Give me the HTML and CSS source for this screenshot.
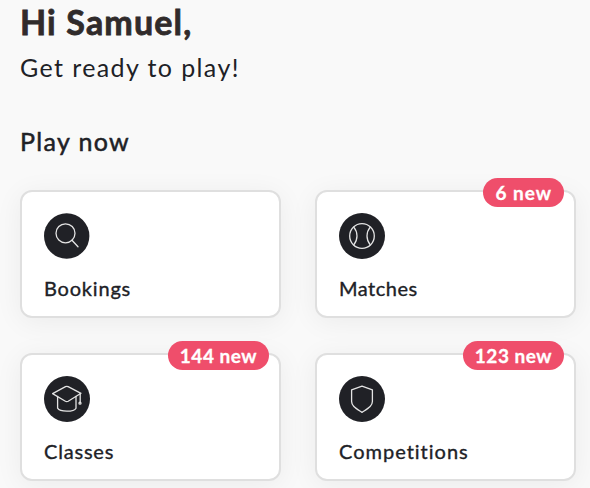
FILE: index.html
```html
<!DOCTYPE html>
<html lang="en">
<head>
    <meta charset="UTF-8">
    <meta name="viewport" content="width=device-width, initial-scale=1.0">
    <title>Play</title>
    <link rel="stylesheet" href="styles.css">
</head>
<body>

<main class="home">
    <h1 class="greeting">Hi Samuel,</h1>
    <p class="subtitle">Get ready to play!</p>

    <h2 class="section-title">Play now</h2>

    <div class="cards">
        <a class="card">
            <svg class="icon" viewBox="0 0 46 46">
                <circle class="disc" cx="22.7" cy="23" r="22.7"/>
                <circle cx="21.5" cy="20.3" r="9.5"/>
                <path d="M28 27.2L34 33.8"/>
            </svg>
            <span class="label bookings">Bookings</span>
        </a>

        <a class="card">
            <span class="badge six">6 new</span>
            <svg class="icon" viewBox="0 0 46 46">
                <circle class="disc" cx="23" cy="23" r="23"/>
                <circle cx="23" cy="23" r="12.3"/>
                <path d="M14.8 14.2Q18 18.2 18 23T14.8 31.8M31.2 14.2Q28 18.2 28 23T31.2 31.8"/>
            </svg>
            <span class="label matches">Matches</span>
        </a>

        <a class="card">
            <span class="badge">144 new</span>
            <svg class="icon" viewBox="0 0 46 46">
                <circle class="disc" cx="23" cy="23" r="23"/>
                <path d="M8.6 17.6L21.5 10.6Q22.8 10 24.1 10.6L37 17.3L24.2 25.2Q22.8 26 21.4 25.2Z"/>
                <path d="M13.6 20.5V32.2C16 36.2 29.8 36.2 32 32.2V20.5M36.2 18V26.5"/>
                <circle cx="36" cy="27.2" r="1"/>
            </svg>
            <span class="label classes">Classes</span>
        </a>

        <a class="card">
            <span class="badge">123 new</span>
            <svg class="icon" viewBox="0 0 46 46">
                <circle class="disc" cx="23" cy="23" r="23"/>
                <path d="M23 10.2L33.4 13.8V25.5C33.4 30 29.2 32.2 23 36.4C16.8 32.2 12.6 30 12.6 25.5V13.8Z"/>
            </svg>
            <span class="label competitions">Competitions</span>
        </a>
    </div>
</main>

</body>
</html>
```

FILE: styles.css
```css
* {
    box-sizing: border-box;
}
body {
    margin: 0;
    height: 488px;
    overflow: hidden;
    background-color: #f9f9f9;
    color: #202126;
    font-family: Lato, "Open Sans", sans-serif;
}
.home {
    padding: 1px 14px 0 20px;
}
.greeting {
    margin: 0;
    font-size: 34px;
    line-height: 42px;
    font-weight: 700;
    letter-spacing: 1.15px;
    color: #302b2b;
    -webkit-text-stroke: 0.8px #302b2b;
}
.subtitle {
    margin: 4px 0 0;
    font-size: 25px;
    line-height: 40px;
    letter-spacing: 1.4px;
}
.section-title {
    margin: 34px 0 0;
    font-size: 25px;
    line-height: 40px;
    font-weight: 400;
    letter-spacing: 1.35px;
    -webkit-text-stroke: 0.5px #202126;
}
.cards {
    display: grid;
    grid-template-columns: 260px 260px;
    gap: 35px;
    margin-top: 29px;
}
.card {
    position: relative;
    display: flex;
    flex-direction: column;
    align-items: flex-start;
    width: 261px;
    height: 128px;
    padding: 21px 22px 0;
    background-color: #fff;
    border: 2px solid #dfdfdf;
    border-radius: 12px;
    box-shadow: 0 4px 28px rgba(0, 0, 0, 0.06);
}
.icon {
    width: 46px;
    height: 46px;
    fill: none;
    stroke: #e4e4e4;
    stroke-width: 1.3;
    stroke-linecap: round;
    stroke-linejoin: round;
}
.disc {
    fill: #202126;
    stroke: none;
}
.label {
    margin-top: 15px;
    font-size: 20px;
    line-height: 28px;
    letter-spacing: 0.8px;
    -webkit-text-stroke: 0.35px #202126;
}
.matches {
    letter-spacing: 0.5px;
}
.competitions {
    letter-spacing: 1px;
}
.badge {
    position: absolute;
    top: -14px;
    right: 10px;
    height: 29px;
    padding: 0 12px;
    border-radius: 15px;
    background-color: #ef4e6b;
    color: #fff;
    font-size: 19px;
    line-height: 30px;
    font-weight: 700;
    letter-spacing: 0.5px;
    -webkit-text-stroke: 0.3px #fff;
}
.six {
    letter-spacing: 1px;
}
```
